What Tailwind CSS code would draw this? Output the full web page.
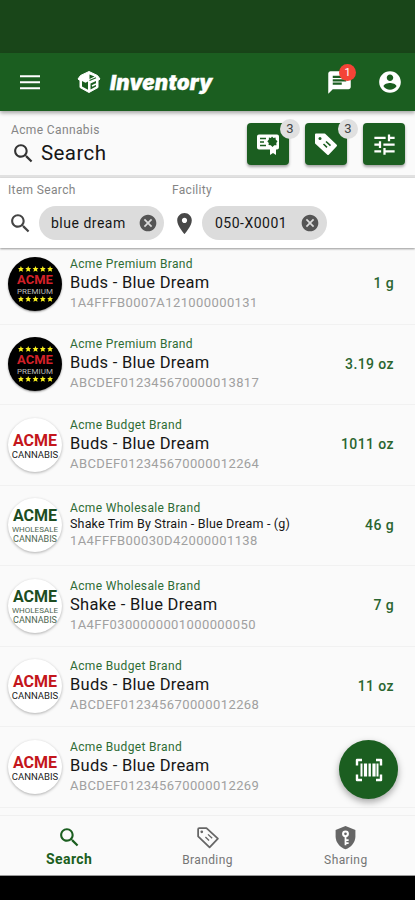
<!DOCTYPE html>
<html lang="en">
<head>
    <meta charset="UTF-8">
    <meta name="viewport" content="width=device-width, initial-scale=1.0">
    <title>Inventory</title>
    <script src="https://cdn.jsdelivr.net/npm/@tailwindcss/browser@4"></script>
</head>
<body class="bg-black font-['Roboto',sans-serif]">
    <!-- Shared icons -->
    <svg class="hidden">
        <symbol id="search" viewBox="0 0 24 24"><path d="M15.5 14h-.79l-.28-.27C15.41 12.59 16 11.11 16 9.5 16 5.91 13.09 3 9.5 3S3 5.91 3 9.5 5.91 16 9.5 16c1.61 0 3.09-.59 4.23-1.57l.27.28v.79l5 4.99L20.49 19l-4.99-5zm-6 0C7.01 14 5 11.99 5 9.5S7.01 5 9.5 5 14 7.01 14 9.5 11.99 14 9.5 14z"/></symbol>
        <symbol id="cancel" viewBox="0 0 24 24"><path d="M12 2C6.47 2 2 6.47 2 12s4.47 10 10 10 10-4.47 10-10S17.53 2 12 2zm5 13.59L15.59 17 12 13.41 8.41 17 7 15.59 10.59 12 7 8.41 8.41 7 12 10.59 15.59 7 17 8.41 13.41 12 17 15.59z"/></symbol>
        <symbol id="stars" viewBox="0 0 36 6">
            <path id="star" d="M3 0l.9 1.900h2.100L4.500 3.500l.6 2.400L3 4.900.9 5.900l.6-2.400L0 1.900h2.100z"/>
            <use href="#star" x="7.500"/><use href="#star" x="15"/><use href="#star" x="22.500"/><use href="#star" x="30"/>
        </symbol>
    </svg>

    <div class="flex flex-col h-[876px] w-[415px] bg-[#fafafa] overflow-hidden">
        <div class="h-[53px] shrink-0 bg-[#194619]"></div>

        <header class="relative z-20 h-[58px] shrink-0 bg-[#1b5e20] flex items-center pl-[18px] pr-3 shadow-[0_2px_4px_rgba(0,0,0,0.35)]">
            <svg class="size-6 fill-white" viewBox="0 0 24 24"><path d="M2 5.300h20v2H2zM2 11.300h20v2H2zM2 17.300h20v2H2z"/></svg>
            <svg class="size-6 ml-[35px]" viewBox="0 0 24 24">
                <path class="fill-white stroke-white" stroke-linejoin="round" d="M12 1.500l8.500 4L23 9l-2 1.500V17.500L12 22.500 3 17.500v-7L1 9l2.500-3.500z"/>
                <path class="fill-[#1b5e20]" d="M5 11l3.500 1.800L11 11.500v8.300l-6-3.200z"/>
                <path class="fill-[#1b5e20]" d="M13.500 13.500l5.500-2.500v5.600l-5.500 3z"/>
                <path class="fill-[#1b5e20]" d="M12.500 4.500l5 2-5 2.500z"/>
                <path class="fill-none stroke-white" stroke-width="1.400" d="M15 16l4-2"/>
                <path class="fill-none stroke-[#1b5e20]" stroke-width="1.200" d="M12.500 10.500l6.500-2.700"/>
            </svg>
            <h1 class="ml-[9px] w-[112px] text-white text-[20.5px] leading-6 pt-[2px] font-black italic font-['Inter',sans-serif] tracking-[0.25px] [-webkit-text-stroke:0.4px_white]">Inventory</h1>
            <div class="relative ml-auto mr-[24px]">
                <svg class="size-[27px] fill-white" viewBox="0 0 24 24"><path d="M20 2H4c-1.100 0-1.990.9-1.990 2L2 22l4-4h14c1.100 0 2-.9 2-2V4c0-1.100-.9-2-2-2zM6 9h12v2H6V9zm8 5H6v-2h8v2zm4-6H6V6h12v2z"/></svg>
                <span class="absolute -top-[5px] left-[13px] size-[17px] rounded-full bg-[#f44336] text-white text-[11px] leading-[17px] text-center">1</span>
            </div>
            <svg class="size-[26px] fill-white" viewBox="0 0 24 24"><path d="M12 2C6.480 2 2 6.480 2 12s4.480 10 10 10 10-4.480 10-10S17.520 2 12 2zm0 3c1.660 0 3 1.340 3 3s-1.340 3-3 3-3-1.340-3-3 1.340-3 3-3zm0 14.200c-2.500 0-4.710-1.280-6-3.220.03-1.990 4-3.080 6-3.080 1.990 0 5.970 1.090 6 3.080-1.290 1.940-3.500 3.220-6 3.220z"/></svg>
        </header>

        <section class="h-[67px] shrink-0 flex justify-between pl-[11px] pr-[10px] border-b-3 border-[#e1e1e1]">
            <div class="pt-[11px]">
                <p class="text-xs leading-4 tracking-[0.37px] text-[#858585]">Acme Cannabis</p>
                <div class="flex items-center">
                    <svg class="size-[25px] fill-[#333]"><use href="#search"/></svg>
                    <h2 class="ml-[5px] text-[20.5px] leading-[30px] tracking-[0.4px] text-[#161616]">Search</h2>
                </div>
            </div>
            <div class="flex gap-4 pt-3">
                <button class="relative size-[42px] rounded-[4px] bg-[#1b5e20] flex items-center justify-center shadow-[0_2px_3px_rgba(0,0,0,0.35)]">
                    <svg class="size-[24px]" viewBox="0 0 24 24">
                        <path class="fill-white" d="M3 2.500h18a2 2 0 0 1 2 2v11a2 2 0 0 1-2 2h-1V23l-3-2-3 2v-5.500H3a2 2 0 0 1-2-2v-11a2 2 0 0 1 2-2z"/>
                        <path class="fill-none stroke-[#1b5e20]" stroke-width="1.600" d="M4 6.500h6M4 10h4M4 13.500h6"/>
                        <path class="fill-[#1b5e20]" d="M16 4.500l1.500 1.500 2-.5.3 2.200 1.700 1.500-1.200 1.700.2 2.300-2.200.1-1.800 1.700-1.700-1.700-2.300-.3.3-2.100-1.500-1.700 1.500-1.500.1-2.200 2 .4z"/>
                    </svg>
                    <span class="absolute -top-[4px] -right-[11px] size-[20px] rounded-full bg-[#e0e0e0] text-[#444] text-[13px] leading-5 text-center">3</span>
                </button>
                <button class="relative size-[42px] rounded-[4px] bg-[#1b5e20] flex items-center justify-center shadow-[0_2px_3px_rgba(0,0,0,0.35)]">
                    <svg class="size-[24px]" viewBox="0 0 24 24">
                        <path class="fill-white stroke-white" stroke-width="2" stroke-linejoin="round" d="M2 2.500h8.500L22 13.500 14 22 2 11z"/>
                        <circle class="fill-[#1b5e20]" cx="6" cy="6.500" r="1.500"/>
                        <path class="fill-none stroke-[#1b5e20]" stroke-width="1.600" d="M12 9.500l4.500 4.200M9.500 12l3.500 3.300"/>
                    </svg>
                    <span class="absolute -top-[4px] -right-[11px] size-[20px] rounded-full bg-[#e0e0e0] text-[#444] text-[13px] leading-5 text-center">3</span>
                </button>
                <button class="size-[42px] rounded-[4px] bg-[#1b5e20] flex items-center justify-center shadow-[0_2px_3px_rgba(0,0,0,0.35)]">
                    <svg class="size-[27px] fill-white" viewBox="0 0 24 24"><path d="M3 17v2h6v-2H3zM3 5v2h10V5H3zm10 16v-2h8v-2h-8v-2h-2v6h2zM7 9v2H3v2h4v2h2V9H7zm14 4v-2H11v2h10zm-6-4h2V7h4V5h-4V3h-2v6z"/></svg>
                </button>
            </div>
        </section>

        <section class="relative z-10 h-[70px] shrink-0 flex bg-white pl-2 pt-1 shadow-[0_1px_2px_rgba(0,0,0,0.4)]">
            <div class="w-[164px]">
                <p class="text-xs leading-4 tracking-[0.35px] text-[#858585]">Item Search</p>
                <div class="flex items-center mt-2">
                    <svg class="size-[25px] fill-[#444]"><use href="#search"/></svg>
                    <div class="ml-[6px] w-[125px] h-[34px] rounded-full bg-[#dcdcdc] flex items-center justify-between pl-3 pr-[6px]">
                        <span class="text-[14px] tracking-[0.5px] text-[#161616]">blue dream</span>
                        <svg class="size-[20px] fill-[#555]"><use href="#cancel"/></svg>
                    </div>
                </div>
            </div>
            <div>
                <p class="text-xs leading-4 tracking-[0.3px] text-[#858585]">Facility</p>
                <div class="flex items-center mt-2">
                    <svg class="size-[25px] fill-[#484848]" viewBox="0 0 24 24"><path d="M12 2C8.130 2 5 5.130 5 9c0 5.250 7 13 7 13s7-7.750 7-13c0-3.870-3.130-7-7-7zm0 9.500c-1.380 0-2.500-1.120-2.500-2.500s1.120-2.500 2.500-2.500 2.500 1.120 2.500 2.500-1.120 2.500-2.500 2.500z"/></svg>
                    <div class="ml-[5px] w-[125px] h-[34px] rounded-full bg-[#dcdcdc] flex items-center justify-between pl-[13px] pr-[7px]">
                        <span class="text-[14px] tracking-[0.5px] text-[#161616]">050-X0001</span>
                        <svg class="size-[20px] fill-[#555]"><use href="#cancel"/></svg>
                    </div>
                </div>
            </div>
        </section>

        <main class="h-[567px] shrink-0 overflow-hidden">
            <ul id="items" class="-mt-[4px]"></ul>
        </main>

        <nav class="h-[61px] shrink-0 grid grid-cols-3 bg-[#fafafa] border-t border-[#f0f0f0] border-b-[#999] border-b text-xs tracking-[0.4px] text-[#757575] text-center">
            <a class="flex flex-col items-center pt-[9px] font-bold text-[14px] leading-[18px] text-[#1b5e20]">
                <svg class="size-[25px] fill-[#1b5e20]"><use href="#search"/></svg>
                Search
            </a>
            <a class="flex flex-col items-center pt-[9px] leading-[18px]">
                <svg class="size-[25px] fill-none stroke-[#666]" viewBox="0 0 24 24">
                    <path stroke-width="1.700" stroke-linejoin="round" d="M3 4q0-1 1-1h7L22 13l-8 8.500L3 11z"/>
                    <circle class="fill-[#666] stroke-none" cx="6.500" cy="6.500" r="1.300"/>
                    <path stroke-width="1.300" d="M12.500 9l4 3.800M10 11.500l3.500 3.300"/>
                </svg>
                <span class="mt-[1px]">Branding</span>
            </a>
            <a class="flex flex-col items-center pt-[9px] leading-[18px]">
                <svg class="size-[25px]" viewBox="0 0 24 24">
                    <path class="fill-[#666]" d="M12 1l9.500 3.700V11c0 5.500-4 10.500-9.500 12.200C6.500 21.500 2.500 16.500 2.500 11V4.700z"/>
                    <circle class="fill-none stroke-white" stroke-width="2" cx="12" cy="8.500" r="2.300"/>
                    <path class="fill-none stroke-white" stroke-width="1.700" d="M12 11v8.500M12 14.500h3M12 17.500h3"/>
                </svg>
                <span class="mt-[1px]">Sharing</span>
            </a>
        </nav>
    </div>

    <!-- Scan button floats over the list -->
    <button class="absolute z-30 left-[339px] top-[740px] size-[59px] rounded-full bg-[#1b5e20] flex items-center justify-center shadow-[0_3px_7px_rgba(0,0,0,0.35)]">
        <svg class="w-[28px] h-[24px] fill-none stroke-white" viewBox="0 0 28 24">
            <path stroke-width="2.400" stroke-linejoin="round" d="M7 2H2v5.500M21 2h5v5.500M7 22H2v-5.500M21 22h5v-5.500"/>
            <path stroke-width="2" d="M6.500 5.500v13M22.500 5.500v13"/>
            <path stroke-width="3.200" d="M10.500 5.500v13M19 5.500v13"/>
            <path stroke-width="2.400" d="M14.700 5.500v13"/>
        </svg>
    </button>

    <script>
        const items = [
            { logo: 'premium', brand: 'Acme Premium Brand', name: 'Buds - Blue Dream', tag: '1A4FFFB0007A121000000131', qty: '1 g' },
            { logo: 'premium', brand: 'Acme Premium Brand', name: 'Buds - Blue Dream', tag: 'ABCDEF012345670000013817', qty: '3.19 oz' },
            { logo: 'budget', brand: 'Acme Budget Brand', name: 'Buds - Blue Dream', tag: 'ABCDEF012345670000012264', qty: '1011 oz' },
            { logo: 'wholesale', brand: 'Acme Wholesale Brand', name: 'Shake Trim By Strain - Blue Dream - (g)', small: true, tag: '1A4FFFB00030D42000001138', qty: '46 g' },
            { logo: 'wholesale', brand: 'Acme Wholesale Brand', name: 'Shake - Blue Dream', tag: '1A4FF0300000001000000050', qty: '7 g' },
            { logo: 'budget', brand: 'Acme Budget Brand', name: 'Buds - Blue Dream', tag: 'ABCDEF012345670000012268', qty: '11 oz' },
            { logo: 'budget', brand: 'Acme Budget Brand', name: 'Buds - Blue Dream', tag: 'ABCDEF012345670000012269', qty: '' }
        ];

        const logos = {
            premium: `
                <div class="size-[54px] shrink-0 rounded-full bg-black flex flex-col items-center justify-center shadow-[0_1px_2px_rgba(0,0,0,0.4)]">
                    <svg class="w-[35px] h-[6px] fill-[#f5ec1c]"><use href="#stars"/></svg>
                    <span class="text-[13px] leading-[15px] font-bold text-[#d32028]">ACME</span>
                    <span class="text-[8px] leading-[9px] text-[#bbb]">PREMIUM</span>
                    <svg class="w-[35px] h-[6px] fill-[#f5ec1c]"><use href="#stars"/></svg>
                </div>`,
            budget: `
                <div class="size-[54px] shrink-0 rounded-full bg-white flex flex-col items-center pt-[14px] shadow-[0_1px_3px_rgba(0,0,0,0.3)]">
                    <span class="text-[16px] leading-[18px] font-bold text-[#c4161c]">ACME</span>
                    <span class="text-[9.5px] leading-[10px] text-[#222]">CANNABIS</span>
                </div>`,
            wholesale: `
                <div class="size-[54px] shrink-0 rounded-full bg-white flex flex-col items-center pt-[9px] shadow-[0_1px_3px_rgba(0,0,0,0.3)]">
                    <span class="text-[16px] leading-[18px] font-bold text-[#1d4d22]">ACME</span>
                    <span class="text-[8px] leading-[9px] text-[#4d6650]">WHOLESALE</span>
                    <span class="text-[9px] leading-[10px] text-[#4d6650]">CANNABIS</span>
                </div>`
        };

        document.getElementById('items').innerHTML = items.map(item => `
            <li class="h-[80.5px] flex items-center pl-2 pr-[21px] border-b border-[#f1f1f1]">
                ${logos[item.logo]}
                <div class="ml-2 flex-1 whitespace-nowrap">
                    <p class="text-xs leading-4 tracking-[0.35px] text-[#2e6b34]">${item.brand}</p>
                    <p class="${item.small ? 'text-[12.5px] leading-[16px] tracking-[0.17px]' : 'text-[16.5px] leading-[22px] tracking-[0.29px]'} text-[#161616]">${item.name}</p>
                    <p class="text-[13px] leading-[18px] tracking-[0.4px] text-[#a0a0a0]">${item.tag}</p>
                </div>
                <span class="text-[14px] font-medium tracking-[0.4px] text-[#2a6530]">${item.qty}</span>
            </li>
        `).join('');
    </script>
</body>
</html>
